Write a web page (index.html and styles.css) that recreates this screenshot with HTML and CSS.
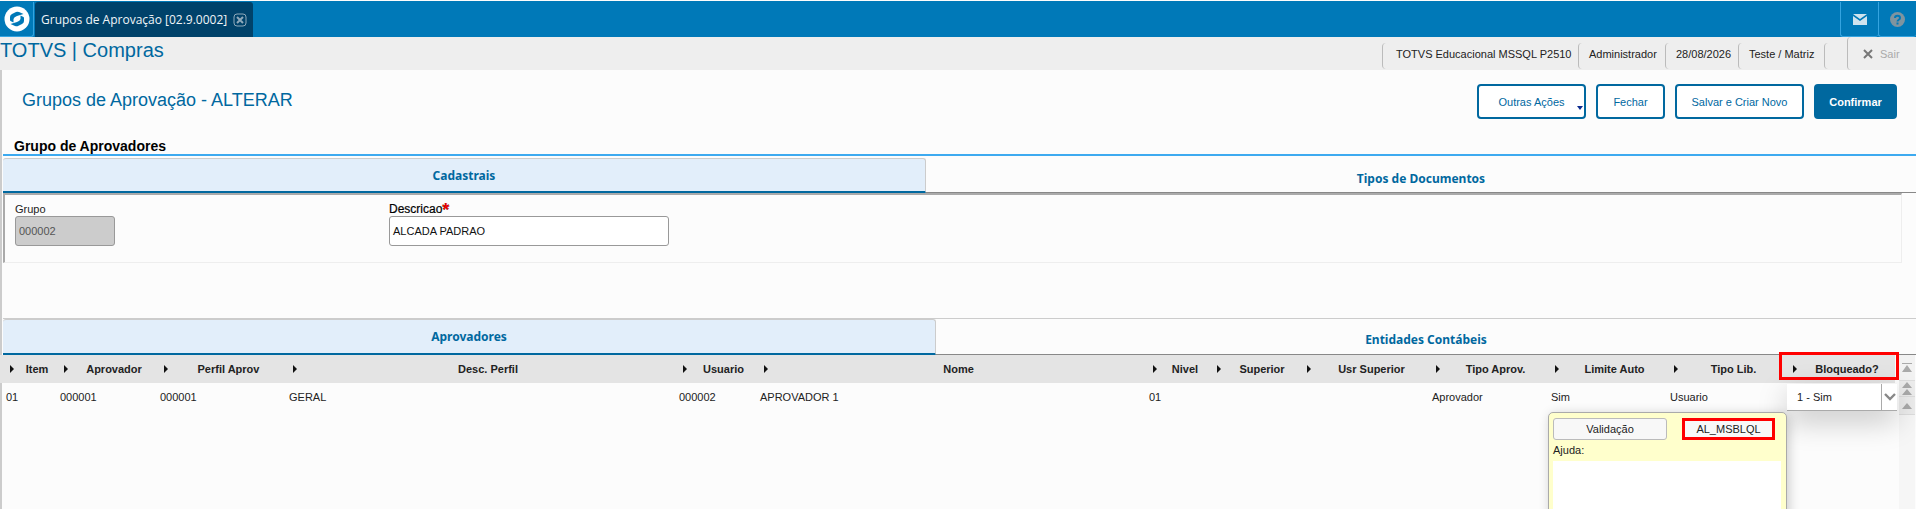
FILE: index.html
```html
<!DOCTYPE html>
<html>
<head>
  <meta charset="UTF-8">
  <title>Grupos de Aprovação</title>
  <link rel="stylesheet" href="styles.css">
</head>
<body>
<div class="topbar">
  <div class="logotile">
    <svg width="26" height="26" viewBox="0 0 26 26">
      <circle cx="13" cy="13" r="12.5" fill="#fff"/>
      <path d="M6 11 Q6 9 8 8 L12 6 Q13 5.5 15 6 L19.5 8 L13 10 Q10 11 9.5 13 V16.5 L6.5 15 Q6 14.5 6 14 Z" fill="#0079b8"/>
      <path d="M6 11 Q6 9 8 8 L12 6 Q13 5.5 15 6 L19.5 8 L13 10 Q10 11 9.5 13 V16.5 L6.5 15 Q6 14.5 6 14 Z" fill="#0079b8" transform="rotate(180 13 13)"/>
    </svg>
  </div>
  <div class="tab">
    <span>Grupos de Aprovação [02.9.0002]</span>
    <svg class="tabclose" width="14" height="14" viewBox="0 0 14 14">
      <rect x="1" y="1" width="12" height="12" rx="3" fill="none" stroke="#8fa9ba"/>
      <path d="M4 4 L10 10 M10 4 L4 10" stroke="#8fa9ba" stroke-width="2"/>
    </svg>
  </div>
  <div class="topspace"></div>
  <div class="topicon">
    <svg width="14" height="11" viewBox="0 0 14 11">
      <path d="M0 0 H14 L7 5 Z M0 2 L7 7 L14 2 V11 H0 Z" fill="#cfe3ee"/>
    </svg>
  </div>
  <div class="topicon">
    <svg width="15" height="15" viewBox="0 0 15 15">
      <circle cx="7.5" cy="7.5" r="7.5" fill="#7f949f"/>
      <path d="M5 6 C5 3 10 3 10 6 C10 8 7.5 7.5 7.5 9.5" fill="none" stroke="#0079b8" stroke-width="2"/>
      <rect x="6.5" y="10.5" width="2" height="2" fill="#0079b8"/>
    </svg>
  </div>
</div>

<div class="infobar">
  <div class="apptitle">TOTVS | Compras</div>
  <div class="infoitem w196">TOTVS Educacional MSSQL P2510</div>
  <div class="infoitem w87">Administrador</div>
  <div class="infoitem w73">28/08/2026</div>
  <div class="infoitem w86">Teste / Matriz</div>
  <div class="infoend"></div>
  <div class="sair">
    <svg width="10" height="10" viewBox="0 0 10 10"><path d="M1 1 L9 9 M9 1 L1 9" stroke="#777" stroke-width="2"/></svg>
    <span>Sair</span>
  </div>
</div>

<div class="content">
  <div class="pagehead">
    <div class="pagetitle">Grupos de Aprovação - ALTERAR</div>
    <div class="actions">
      <button class="btn btnmore">Outras Ações<i class="caret"></i></button>
      <button class="btn w69">Fechar</button>
      <button class="btn w129">Salvar e Criar Novo</button>
      <button class="btn btnmain">Confirmar</button>
    </div>
  </div>
  <div class="sectiontitle">Grupo de Aprovadores</div>

  <div class="tabs tabs1">
    <div class="tabitem tabon">Cadastrais</div>
    <div class="tabitem">Tipos de Documentos</div>
  </div>
  <div class="formpanel">
    <div class="field grupo">
      <label>Grupo</label>
      <div class="input disabled">000002</div>
    </div>
    <div class="field descricao">
      <label class="req">Descricao<b>*</b></label>
      <div class="input">ALCADA PADRAO</div>
    </div>
  </div>
  <div class="blank"></div>

  <div class="tabs tabs2">
    <div class="tabitem tabon">Aprovadores</div>
    <div class="tabitem">Entidades Contábeis</div>
  </div>

  <div class="gridwrap">
    <div class="gridhead">
      <div class="hcell"><i></i><span>Item</span></div>
      <div class="hcell"><i></i><span>Aprovador</span></div>
      <div class="hcell"><i></i><span>Perfil Aprov</span></div>
      <div class="hcell"><i></i><span>Desc. Perfil</span></div>
      <div class="hcell"><i></i><span>Usuario</span></div>
      <div class="hcell"><i></i><span>Nome</span></div>
      <div class="hcell"><i></i><span>Nivel</span></div>
      <div class="hcell"><i></i><span>Superior</span></div>
      <div class="hcell"><i></i><span>Usr Superior</span></div>
      <div class="hcell"><i></i><span>Tipo Aprov.</span></div>
      <div class="hcell"><i></i><span>Limite Auto</span></div>
      <div class="hcell"><i></i><span>Tipo Lib.</span></div>
      <div class="hcell"><i></i><span>Bloqueado?</span></div>
    </div>
    <div class="gridrow">
      <div>01</div><div>000001</div><div>000001</div><div>GERAL</div><div>000002</div><div>APROVADOR 1</div><div>01</div><div></div><div></div><div>Aprovador</div><div>Sim</div><div>Usuario</div><div></div>
    </div>

    <div class="scrollbar">
      <div class="sbtn sbtop"><svg width="10" height="10" viewBox="0 0 10 10"><path d="M0 0 H10 V1 H0 Z M5 2 L10 9 H0 Z" fill="#aaa"/></svg></div>
      <div class="sbtn sbmid"><svg width="10" height="13" viewBox="0 0 10 13"><path d="M5 0 L10 6 H0 Z M5 7 L10 13 H0 Z" fill="#aaa"/></svg></div>
      <div class="sbtn sblow"><svg width="10" height="6" viewBox="0 0 10 6"><path d="M5 0 L10 6 H0 Z" fill="#aaa"/></svg></div>
    </div>

    <div class="redbox headmark"></div>

    <div class="combo">
      <span>1 - Sim</span>
      <div class="comboarrow">
        <svg width="12" height="8" viewBox="0 0 12 8"><path d="M1 1 L6 6 L11 1" fill="none" stroke="#888" stroke-width="2.4"/></svg>
      </div>
    </div>

    <div class="helpbox">
      <div class="helpbtns">
        <div class="helpbtn">Validação</div>
        <div class="helpbtn helpfield">AL_MSBLQL</div>
      </div>
      <div class="helplabel">Ajuda:</div>
      <div class="helptext"></div>
    </div>
  </div>
</div>
</body>
</html>
```

FILE: styles.css
```css
html, body {
  margin: 0;
  height: 509px;
  overflow: hidden;
}

body {
  background-color: #fcfcfc;
  font-family: "Liberation Sans", Arial, sans-serif;
  font-size: 11px;
  color: #222;
}

.topbar {
  display: flex;
  height: 36px;
  margin-top: 1px;
  background-color: #0079b8;
  border-top: 1px solid #0079b8;
  box-sizing: border-box;
}

.logotile {
  width: 34px;
  height: 35px;
  display: flex;
  align-items: center;
  justify-content: center;
  border-right: 1px solid #35a4e0;
  border-bottom: 1px solid #35a4e0;
  border-bottom-right-radius: 3px;
  box-sizing: border-box;
}

.tab {
  width: 218px;
  height: 35px;
  margin-left: 1px;
  padding-left: 6px;
  display: flex;
  align-items: center;
  gap: 6px;
  box-sizing: border-box;
  background-color: #00426a;
  border-radius: 3px 3px 0 0;
  color: #f0f5f8;
  font-family: "Open Sans", sans-serif;
  font-size: 12px;
}

.topspace {
  flex: 1;
}

.topicon {
  width: 38px;
  height: 35px;
  display: flex;
  align-items: center;
  justify-content: center;
  box-sizing: border-box;
  border-left: 1px solid #35a4e0;
  border-bottom: 1px solid #35a4e0;
  border-radius: 0 0 3px 3px;
}

.infobar {
  display: flex;
  height: 33px;
  background-color: #eeeeee;
}

.apptitle {
  flex: 1;
  font-size: 20px;
  line-height: 27px;
  color: #00689f;
}

.infoitem {
  margin-top: 6px;
  height: 26px;
  line-height: 23px;
  padding-left: 10px;
  box-sizing: border-box;
  border-left: 1px solid #bbb;
  border-radius: 4px 0 0 4px;
  white-space: nowrap;
  color: #222;
}

.w196 { width: 196px; padding-left: 13px; }
.w87 { width: 87px; }
.w73 { width: 73px; }
.w86 { width: 86px; }

.infoend {
  width: 22px;
  margin-top: 6px;
  height: 26px;
  border-left: 1px solid #bbb;
  border-radius: 4px 0 0 4px;
}

.sair {
  width: 69px;
  height: 33px;
  padding-left: 15px;
  display: flex;
  align-items: center;
  gap: 7px;
  box-sizing: border-box;
  border-left: 1px solid #bbb;
  border-radius: 4px 0 0 4px;
  color: #aaa;
}

.content {
  height: 439px;
  border-left: 2px solid #ccc;
  box-sizing: border-box;
}

.pagehead {
  display: flex;
  justify-content: space-between;
  height: 65px;
  padding: 14px 19px 0 20px;
  box-sizing: border-box;
}

.pagetitle {
  margin-top: 6px;
  font-size: 18px;
  color: #00689f;
}

.actions {
  display: flex;
  gap: 10px;
}

.btn {
  position: relative;
  height: 35px;
  padding: 0;
  box-sizing: border-box;
  background-color: #fff;
  border: 2px solid #00689f;
  border-radius: 4px;
  font-family: "Liberation Sans", Arial, sans-serif;
  font-size: 11px;
  color: #00689f;
}

.btnmore { width: 109px; }
.w69 { width: 69px; }
.w129 { width: 129px; }

.btnmain {
  width: 83px;
  background-color: #00689f;
  color: #fff;
  font-weight: bold;
}

.caret {
  position: absolute;
  right: 1px;
  bottom: 7px;
  border-left: 3px solid transparent;
  border-right: 3px solid transparent;
  border-top: 4px solid #0a2a8f;
}

.sectiontitle {
  height: 19px;
  margin-left: 12px;
  font-size: 14px;
  font-weight: bold;
  line-height: 23px;
  color: #000;
}

.tabs {
  display: flex;
  margin-left: 1px;
  font-family: "Noto Sans", sans-serif;
  font-size: 12px;
  font-weight: bold;
  color: #00689f;
}

.tabs1 {
  height: 39px;
  padding-top: 2px;
  box-sizing: border-box;
  border-top: 2px solid #3daaf0;
}

.tabs2 {
  height: 36px;
  border-top: 1px solid #ccc;
}

.tabitem {
  flex: 1;
  display: flex;
  align-items: center;
  justify-content: center;
  padding-top: 6px;
  border-bottom: 1px solid #888;
}

.tabon {
  padding-top: 0;
  background-color: #e2eefa;
  border-bottom: 2px solid #00689f;
  border-top: 1px solid #ccc;
  border-right: 1px solid #ccc;
  border-radius: 3px 3px 0 0;
}

.tabs1 .tabon { flex: 0 0 922px; }
.tabs2 .tabon { flex: 0 0 932px; }

.formpanel {
  display: flex;
  height: 70px;
  margin-right: 14px;
  margin-left: 1px;
  box-sizing: border-box;
  border-top: 2px solid #aaa;
  border-left: 2px solid #aaa;
  border-bottom: 1px solid #eee;
  border-right: 1px solid #eee;
}

.field {
  display: flex;
  flex-direction: column;
  padding-top: 7px;
}

.field label {
  height: 14px;
  line-height: 14px;
  color: #222;
}

.field .req {
  color: #000;
  font-size: 12px;
  -webkit-text-stroke: 0.2px #000;
}

.req b {
  color: #f00;
  font-size: 18px;
  line-height: 10px;
  vertical-align: -3px;
}

.grupo {
  width: 374px;
  margin-left: 10px;
}

.input {
  width: 280px;
  height: 30px;
  padding-left: 3px;
  box-sizing: border-box;
  background-color: #fff;
  border: 1px solid #999;
  border-radius: 3px;
  line-height: 28px;
  color: #111;
}

.disabled {
  width: 100px;
  background-color: #ccc;
  color: #555;
}

.blank {
  height: 55px;
}

.gridwrap {
  position: relative;
  height: 155px;
}

.gridhead, .gridrow {
  display: grid;
  grid-template-columns: 54px 100px 129px 390px 81px 389px 64px 90px 129px 119px 119px 119px 108px;
  margin-left: 4px;
}

.gridhead {
  width: 1895px;
  height: 28px;
  margin-left: -2px;
  padding-left: 6px;
  box-sizing: border-box;
  background-color: #e4e4e4;
}

.hcell {
  display: flex;
  align-items: center;
  padding-left: 4px;
  font-weight: bold;
  color: #222;
}

.hcell i {
  border-top: 4px solid transparent;
  border-bottom: 4px solid transparent;
  border-left: 4px solid #111;
}

.hcell span {
  flex: 1;
  text-align: center;
}

.gridrow {
  height: 30px;
  line-height: 28px;
  color: #222;
}

.scrollbar {
  position: absolute;
  top: 0;
  left: 1897px;
  width: 16px;
  height: 155px;
  background-color: #f6f6f6;
}

.sbtn {
  display: flex;
  align-items: center;
  justify-content: center;
  box-sizing: border-box;
  border-bottom: 1px solid #ddd;
  background-color: #ececec;
}

.sbtop { height: 26px; background-color: #f2f2f2; }
.sbmid { height: 16px; }
.sblow { height: 18px; }

.redbox {
  position: absolute;
  box-sizing: border-box;
  border: 3px solid #f00;
}

.headmark {
  top: -3px;
  left: 1777px;
  width: 120px;
  height: 28px;
}

.combo {
  position: absolute;
  top: 29px;
  left: 1785px;
  width: 110px;
  height: 27px;
  display: flex;
  align-items: center;
  padding-left: 10px;
  box-sizing: border-box;
  background-color: #fff;
  border-bottom: 1px solid #aaa;
  box-shadow: 0 10px 30px rgba(0, 0, 0, 0.22);
}

.combo span {
  flex: 1;
}

.comboarrow {
  width: 15px;
  height: 26px;
  display: flex;
  align-items: center;
  justify-content: center;
  border-left: 1px solid #aaa;
}

.helpbox {
  position: absolute;
  top: 57px;
  left: 1546px;
  width: 239px;
  height: 110px;
  padding: 5px 5px 5px 4px;
  box-sizing: border-box;
  background-color: #ffffcc;
  border: 1px solid #aaa;
  border-radius: 5px 5px 0 0;
  box-shadow: 2px 2px 12px rgba(0, 0, 0, 0.2);
}

.helpbtns {
  display: flex;
  justify-content: space-between;
  padding-right: 6px;
}

.helpbtn {
  width: 114px;
  height: 22px;
  box-sizing: border-box;
  background-color: #f8f8f8;
  border: 1px solid #bbb;
  border-radius: 3px;
  text-align: center;
  line-height: 20px;
}

.helpfield {
  width: 93px;
  border: 3px solid #f00;
  border-radius: 0;
  line-height: 16px;
}

.helplabel {
  height: 21px;
  line-height: 20px;
}

.helptext {
  height: 60px;
  width: 228px;
  background-color: #fff;
}
```
